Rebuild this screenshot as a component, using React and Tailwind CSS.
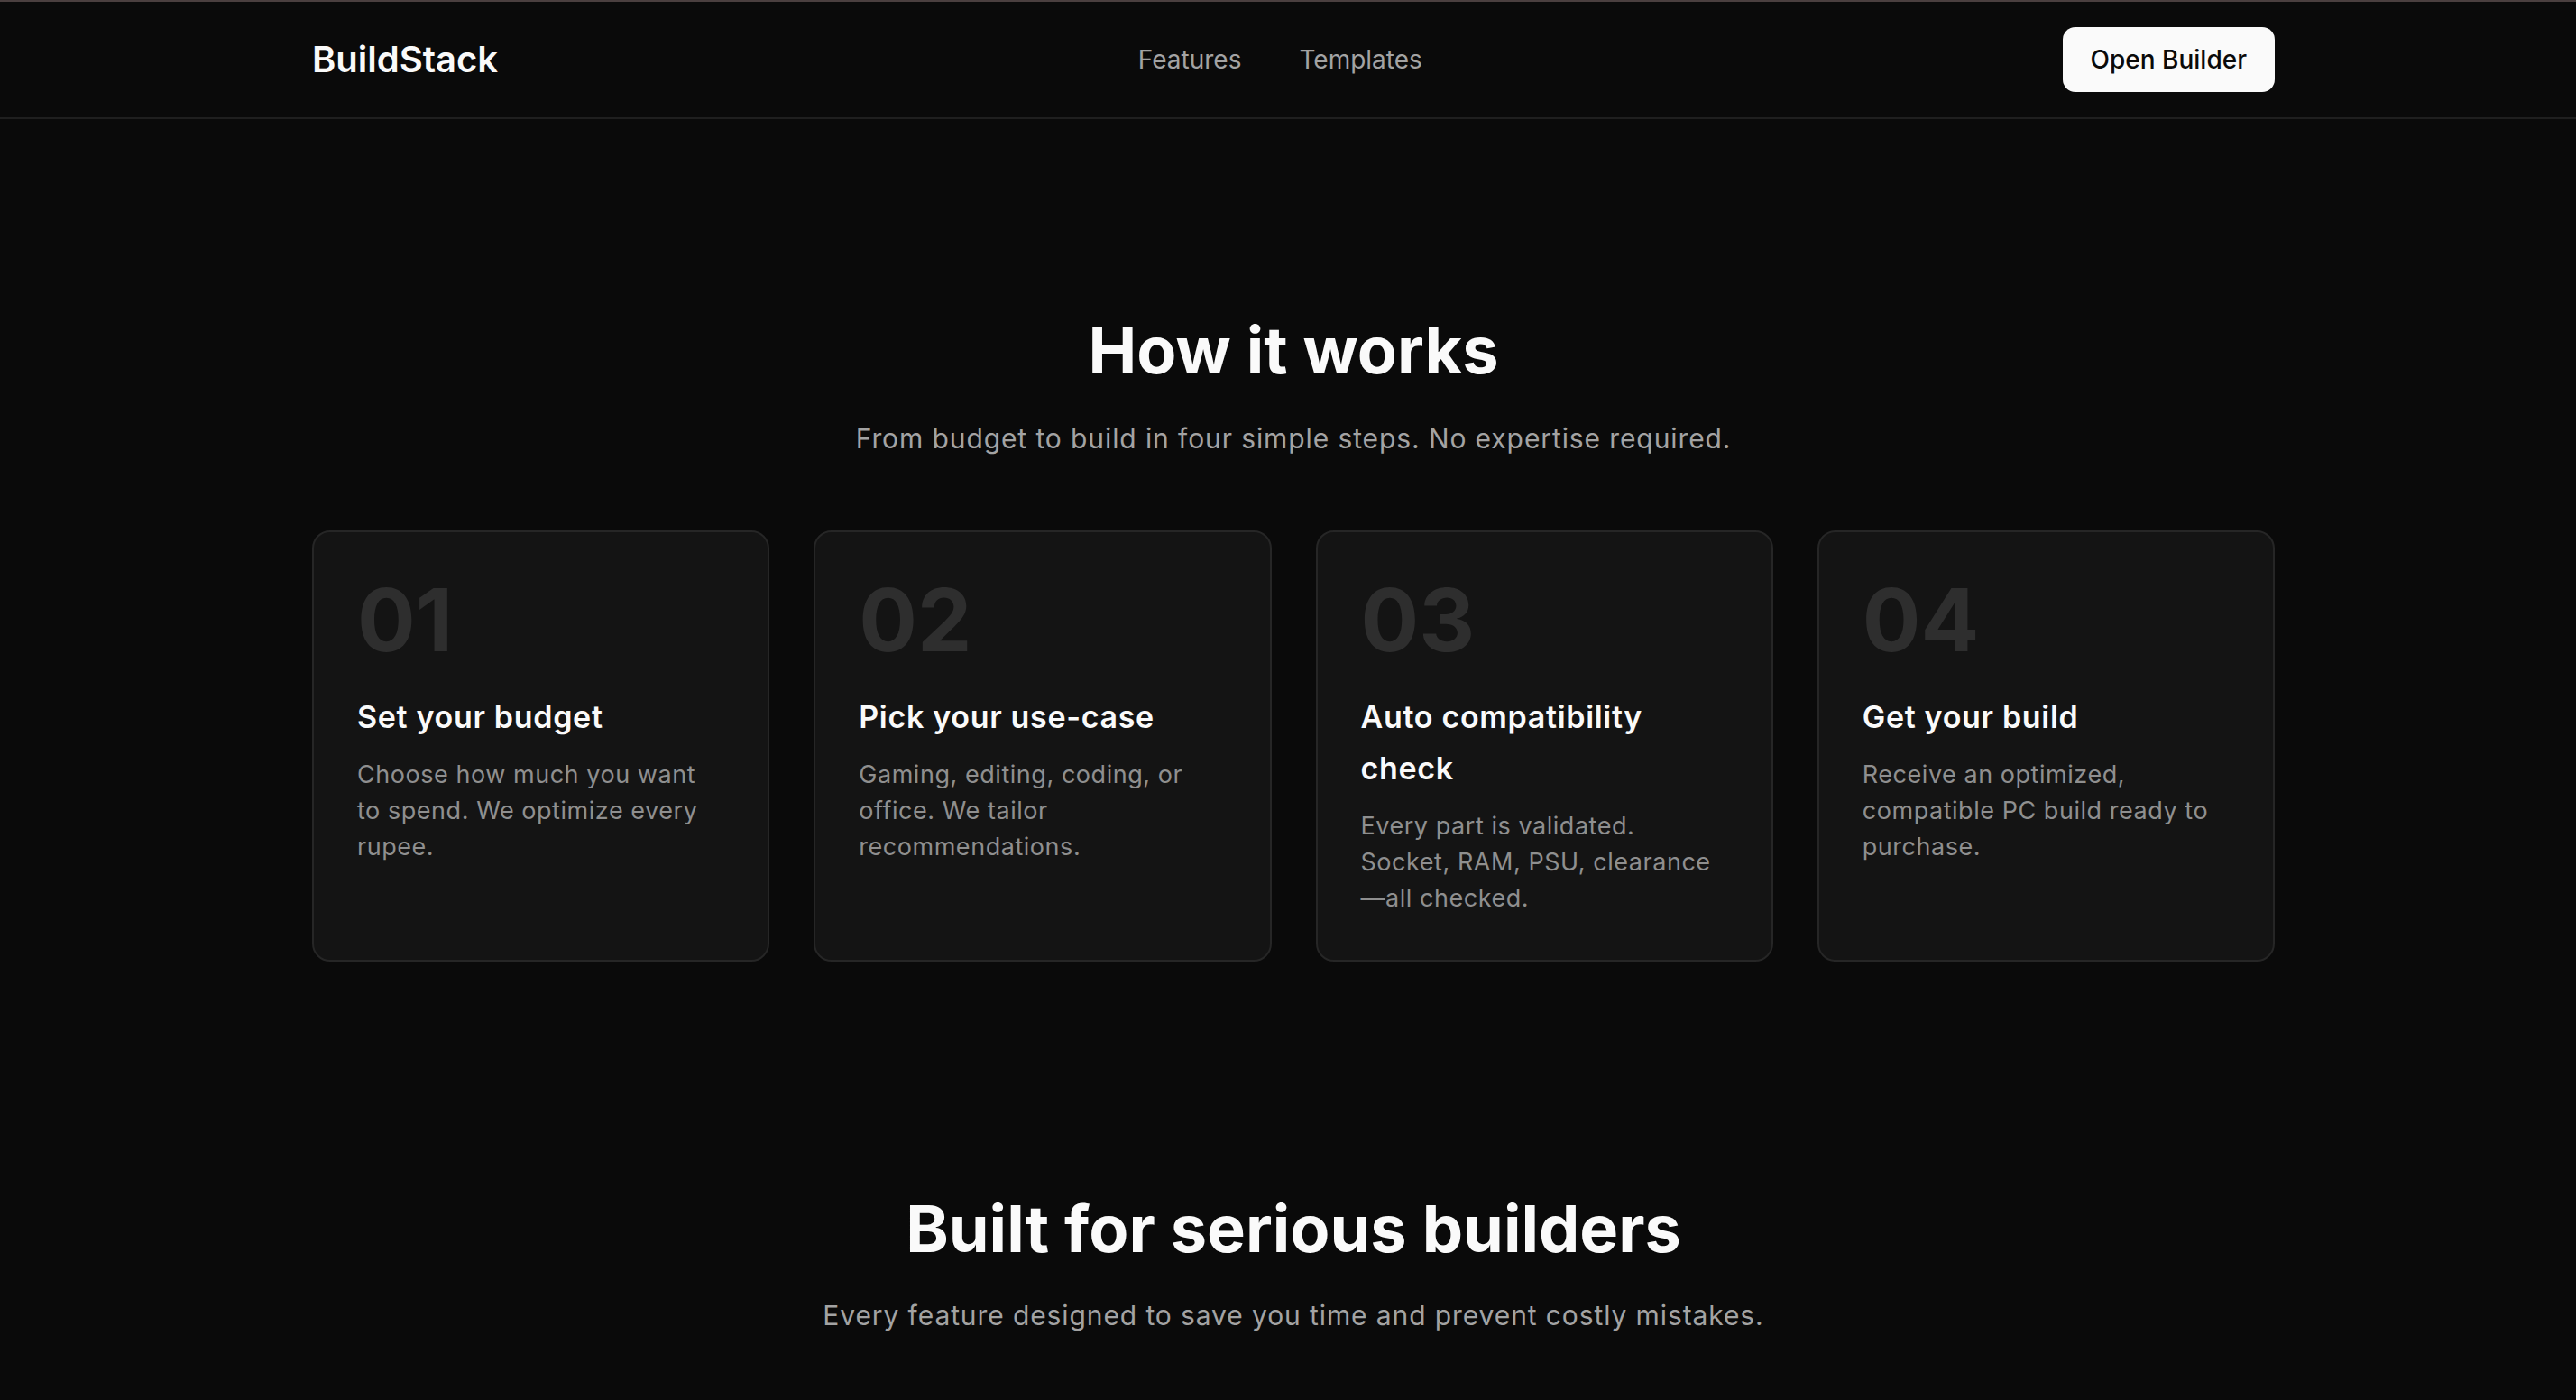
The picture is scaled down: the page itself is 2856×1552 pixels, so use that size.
const steps = [
  {
    n: "01",
    title: "Set your budget",
    text: "Choose how much you want to spend. We optimize every rupee.",
  },
  {
    n: "02",
    title: "Pick your use-case",
    text: "Gaming, editing, coding, or office. We tailor recommendations.",
  },
  {
    n: "03",
    title: "Auto compatibility check",
    text: "Every part is validated. Socket, RAM, PSU, clearance\u2014all checked.",
  },
  {
    n: "04",
    title: "Get your build",
    text: "Receive an optimized, compatible PC build ready to purchase.",
  },
];

export default function App() {
  return (
    <div className="min-h-screen bg-[#0a0a0a] text-[#fafafa] font-['Inter','Noto_Sans',sans-serif] border-t-2 border-[#4a3f3f]">
      {/* Header */}
      <header className="border-b-2 border-[#1f1f1f]">
        <div className="ml-[346px] w-[2176px] h-[128px] flex items-center justify-between">
          <span className="text-[40px] font-semibold">BuildStack</span>
          <nav className="flex gap-16 text-[28px] text-[#a3a3a3]">
            <a>Features</a>
            <a>Templates</a>
          </nav>
          <button className="h-[72px] px-[31px] rounded-[14px] bg-[#fafafa] text-[#0a0a0a] text-[28px] font-medium">
            Open Builder
          </button>
        </div>
      </header>

      {/* How it works */}
      <section className="pt-[216px] pb-[128px] ml-[346px] w-[2176px]">
        <h2 className="text-center text-[72px] leading-[80px] font-bold">How it works</h2>
        <p className="mt-[36px] text-center text-[30px] leading-[44px] tracking-[0.03em] text-[#a3a3a3]">
          From budget to build in four simple steps. No expertise required.
        </p>

        <div className="mt-[80px] grid grid-cols-4 gap-[49px]">
          {steps.map((s) => (
            <div
              key={s.n}
              className="rounded-[20px] border-2 border-[#262626] bg-[#141414] px-12 pt-[49px] pb-12"
            >
              <div className="text-[96px] leading-none font-bold text-[#2e2e2e]">{s.n}</div>
              <h3 className="mt-[31px] text-[34px] leading-[57px] font-semibold tracking-[0.02em]">
                {s.title}
              </h3>
              <p className="mt-[16px] text-[27px] leading-[40px] tracking-[0.02em] text-[#8f8f8f]">
                {s.text}
              </p>
            </div>
          ))}
        </div>
      </section>

      {/* Features */}
      <section className="pt-[128px] pb-[128px] ml-[346px] w-[2176px]">
        <h2 className="text-center text-[72px] leading-[80px] font-bold">Built for serious builders</h2>
        <p className="mt-[34px] text-center text-[30px] leading-[44px] tracking-[0.03em] text-[#a3a3a3]">
          Every feature designed to save you time and prevent costly mistakes.
        </p>
      </section>
    </div>
  );
}
